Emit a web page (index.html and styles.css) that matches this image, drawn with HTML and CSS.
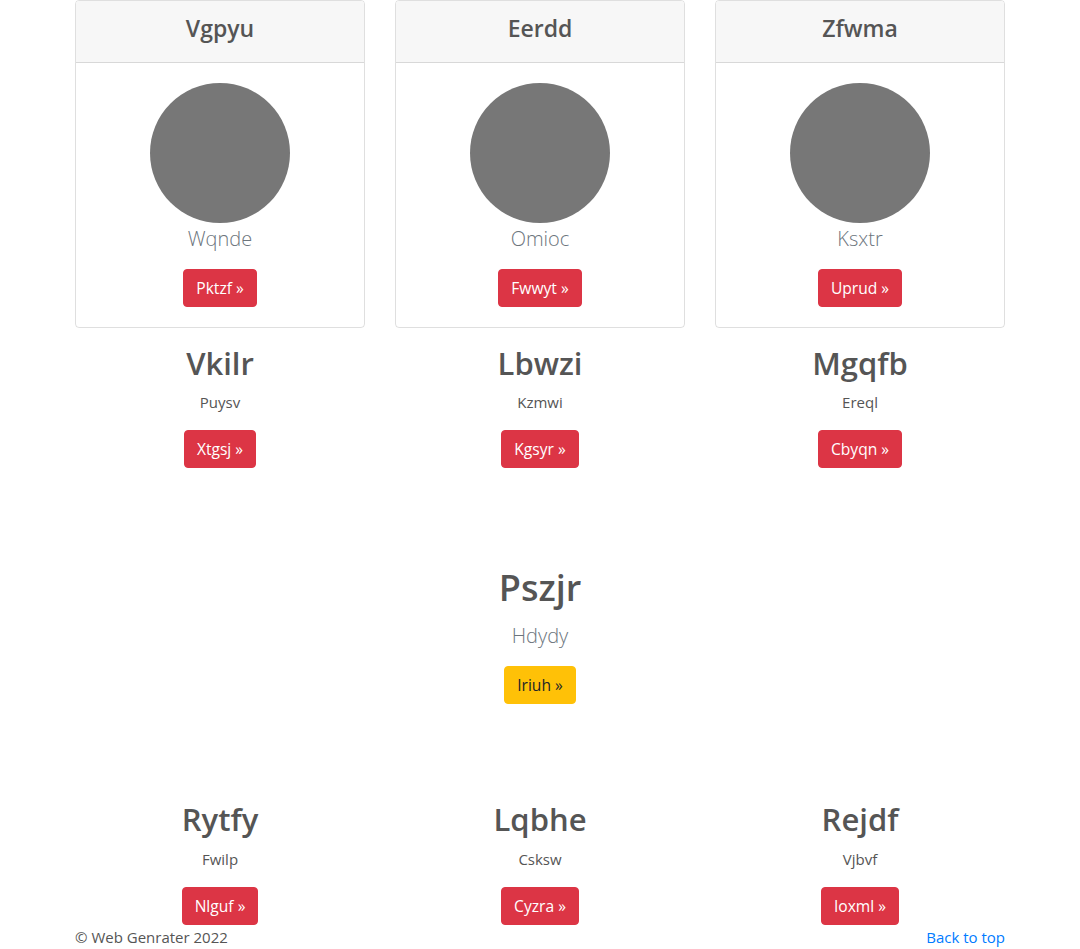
FILE: index.html
```html
<!DOCTYPE html>
<html lang="en">
<head>
<meta charset="utf-8">
<title>Cards</title>
<link rel="stylesheet" href="styles.css">
</head>
<body>
<main class="container">
  <section class="row cards">
    <div class="col">
      <div class="card">
        <div class="card-header"><h4 class="card-title">Vgpyu</h4></div>
        <div class="card-body">
          <div class="avatar"></div>
          <p class="lead muted card-lead">Wqnde</p>
          <a class="btn btn-danger" href="#">Pktzf &raquo;</a>
        </div>
      </div>
      <h2 class="col-title">Vkilr</h2>
      <p class="col-text">Puysv</p>
      <a class="btn btn-danger" href="#">Xtgsj &raquo;</a>
    </div>
    <div class="col">
      <div class="card">
        <div class="card-header"><h4 class="card-title">Eerdd</h4></div>
        <div class="card-body">
          <div class="avatar"></div>
          <p class="lead muted card-lead">Omioc</p>
          <a class="btn btn-danger" href="#">Fwwyt &raquo;</a>
        </div>
      </div>
      <h2 class="col-title">Lbwzi</h2>
      <p class="col-text">Kzmwi</p>
      <a class="btn btn-danger" href="#">Kgsyr &raquo;</a>
    </div>
    <div class="col">
      <div class="card">
        <div class="card-header"><h4 class="card-title">Zfwma</h4></div>
        <div class="card-body">
          <div class="avatar"></div>
          <p class="lead muted card-lead">Ksxtr</p>
          <a class="btn btn-danger" href="#">Uprud &raquo;</a>
        </div>
      </div>
      <h2 class="col-title">Mgqfb</h2>
      <p class="col-text">Ereql</p>
      <a class="btn btn-danger" href="#">Cbyqn &raquo;</a>
    </div>
  </section>

  <section class="hero">
    <h1 class="hero-title">Pszjr</h1>
    <p class="lead muted hero-lead">Hdydy</p>
    <a class="btn btn-warning" href="#">Iriuh &raquo;</a>
  </section>

  <section class="row">
    <div class="col">
      <h2 class="col-title">Rytfy</h2>
      <p class="col-text">Fwilp</p>
      <a class="btn btn-danger" href="#">Nlguf &raquo;</a>
    </div>
    <div class="col">
      <h2 class="col-title">Lqbhe</h2>
      <p class="col-text">Csksw</p>
      <a class="btn btn-danger" href="#">Cyzra &raquo;</a>
    </div>
    <div class="col">
      <h2 class="col-title">Rejdf</h2>
      <p class="col-text">Vjbvf</p>
      <a class="btn btn-danger" href="#">Ioxml &raquo;</a>
    </div>
  </section>
</main>
<footer class="container footer">
  <p class="copy">&copy; Web Genrater 2022</p>
  <a class="top-link" href="#">Back to top</a>
</footer>
</body>
</html>
```

FILE: styles.css
```css
* { box-sizing: border-box; }

body {
  margin: 0;
  font-family: "Open Sans", "Noto Sans", "DejaVu Sans", sans-serif;
  font-size: 16px;
  line-height: 1.5;
  color: #555555;
  background: #ffffff;
}

.container {
  width: 960px;
  margin: 0 auto;
  padding: 0 15px;
}

.row {
  display: grid;
  grid-template-columns: repeat(3, 1fr);
  column-gap: 30px;
}

.col {
  display: flex;
  flex-direction: column;
  align-items: center;
  text-align: center;
}

.card {
  width: 100%;
  border: 1px solid rgba(0, 0, 0, 0.125);
  border-radius: 4px;
  margin-bottom: 16px;
  overflow: hidden;
}

.card-header {
  background: #f7f7f7;
  border-bottom: 1px solid rgba(0, 0, 0, 0.125);
  padding: 9px 20px 15px;
}

.card-title {
  margin: 0;
  font-size: 23px;
  font-weight: 600;
  line-height: 37px;
}

.card-body {
  padding: 20px;
  display: flex;
  flex-direction: column;
  align-items: center;
}

.avatar {
  width: 140px;
  height: 140px;
  border-radius: 50%;
  background: #777777;
}

.lead {
  font-size: 20px;
  font-weight: 300;
  line-height: 30px;
  margin: 0 0 16px;
}

.card-lead {
  margin: 1px 0 15px;
}

.muted { color: #6c757d; }

.col-title {
  margin: 0 0 8px;
  font-size: 31px;
  font-weight: 600;
  line-height: 38.4px;
}

.col-text {
  margin: 0 0 16px;
  font-size: 15px;
  line-height: 24px;
}

.btn {
  display: inline-block;
  padding: 6px 12px;
  font-size: 15.6px;
  line-height: 24px;
  border: 1px solid transparent;
  border-radius: 4px;
  text-decoration: none;
}

.btn-danger { background: #dc3545; border-color: #dc3545; color: #ffffff; }
.btn-warning { background: #ffc107; border-color: #ffc107; color: #212529; }

.hero {
  padding: 97px 0 96px;
  display: flex;
  flex-direction: column;
  align-items: center;
  text-align: center;
}

.hero-title {
  margin: 2px 0 12px;
  font-size: 36px;
  font-weight: 600;
  line-height: 42px;
}

.hero-lead {
  margin: 0 0 15px;
}

.footer {
  display: flex;
  justify-content: space-between;
  line-height: 24px;
  font-size: 15px;
}

.copy { margin: 0; }

.top-link {
  color: #007bff;
  text-decoration: none;
}
```
